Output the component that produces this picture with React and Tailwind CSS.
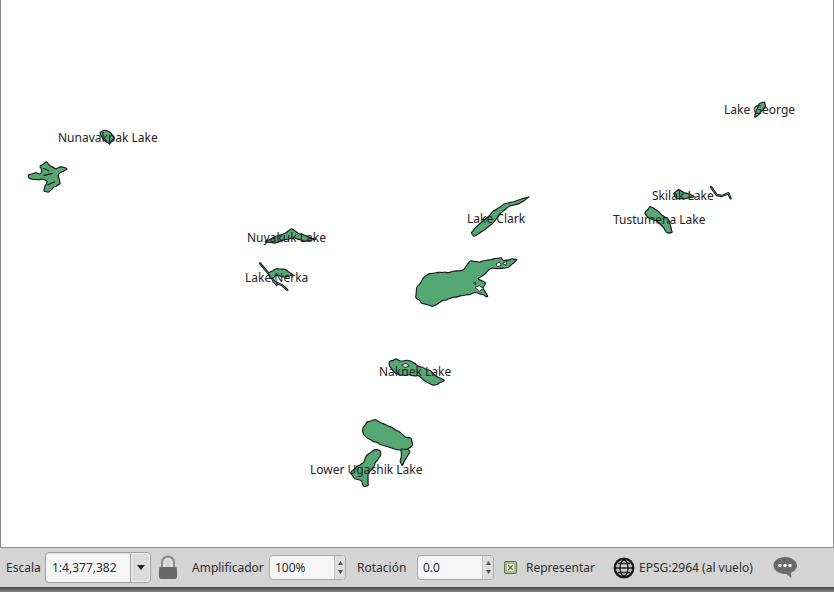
const font = { fontFamily: '"Noto Sans", "Open Sans", sans-serif' };

const labels = [
  ["Lake George", 724, 103],
  ["Nunavakpak Lake", 58, 131],
  ["Skilak Lake", 652, 189],
  ["Lake Clark", 467, 212],
  ["Tustumena Lake", 613, 213],
  ["Nuyakuk Lake", 247, 231],
  ["Lake Nerka", 245, 271],
  ["Naknek Lake", 379, 365],
  ["Lower Ugashik Lake", 310, 463],
];

// Roughens a coarse outline into a natural, slightly rounded coastline, repeatably.
function coast(pts, rough = 2) {
  const out = [];
  let seed = 11;
  const rnd = () => {
    seed = (seed * 16807) % 2147483647;
    return (seed % 1000) / 500 - 1;
  };
  pts.forEach((p, i) => {
    const q = pts[(i + 1) % pts.length];
    const steps = Math.max(1, Math.round(Math.hypot(q[0] - p[0], q[1] - p[1]) / 8));
    for (let s = 0; s < steps; s++) {
      const t = s / steps;
      out.push([p[0] + (q[0] - p[0]) * t + rnd() * rough, p[1] + (q[1] - p[1]) * t + rnd() * rough]);
    }
  });
  const mid = (a, b) => ((a[0] + b[0]) / 2).toFixed(1) + " " + ((a[1] + b[1]) / 2).toFixed(1);
  let d = "M" + mid(out[out.length - 1], out[0]);
  out.forEach((p, i) => {
    d += "Q" + p[0].toFixed(1) + " " + p[1].toFixed(1) + " " + mid(p, out[(i + 1) % out.length]);
  });
  return d + "Z";
}

function Lake({ x, y, pts, rough }) {
  return (
    <g transform={`translate(${x} ${y}) scale(0.3333)`}>
      <path d={coast(pts, rough)} fill="#55a873" stroke="#141414" strokeWidth="3.4" strokeLinejoin="round" />
    </g>
  );
}

function River({ x, y, d }) {
  return (
    <g transform={`translate(${x} ${y}) scale(0.3333)`} fill="none" strokeLinecap="round" strokeLinejoin="round">
      <path d={d} stroke="#141414" strokeWidth="7" />
      <path d={d} stroke="#55a873" strokeWidth="2" />
    </g>
  );
}

function Holes({ x, y, children }) {
  return (
    <g transform={`translate(${x} ${y}) scale(0.3333)`} fill="#fff" stroke="#141414" strokeWidth="2.4">
      {children}
    </g>
  );
}

function MapShapes() {
  return (
    <svg width="832" height="547" viewBox="1 0 832 547" className="absolute left-0 top-0">
      <Lake x={410} y={250} pts={[[18,115],[45,78],[65,70],[120,66],[160,60],[180,32],[210,36],[250,28],[275,22],[280,33],[305,26],[322,28],[298,50],[270,57],[245,54],[225,72],[203,88],[228,98],[218,115],[234,140],[200,127],[165,137],[130,142],[100,152],[70,168],[33,158],[18,142]]} />
      <Holes x={410} y={250}>
        <path d="M195 112L208 107L220 116L208 124Z" />
        <path d="M258 42L268 36L274 46L262 50Z" />
        <path d="M278 40L290 34L288 46Z" />
        <path d="M190 100L196 96L198 103Z" />
      </Holes>
      <Lake x={400} y={190} rough={1} pts={[[388,20],[360,40],[325,50],[300,72],[280,98],[250,122],[222,140],[214,128],[232,108],[260,85],[282,62],[312,42],[350,32]]} />
      <Lake x={300} y={350} pts={[[265,38],[285,27],[302,33],[330,32],[352,48],[385,58],[400,72],[420,86],[433,92],[405,106],[380,98],[358,78],[330,75],[300,75],[283,68],[272,52]]} />
      <Holes x={300} y={350}><path d="M305 45L318 40L328 48L315 52Z" /></Holes>
      <Lake x={350} y={415} pts={[[36,45],[48,22],[75,14],[105,30],[132,40],[165,65],[183,70],[187,92],[172,103],[142,106],[105,92],[62,76],[40,60]]} />
      <Lake x={350} y={415} rough={1} pts={[[152,103],[172,103],[181,110],[168,130],[156,153],[150,140],[155,122]]} />
      <Lake x={350} y={415} pts={[[70,106],[88,105],[92,122],[80,138],[72,155],[55,175],[54,195],[55,213],[40,215],[35,198],[12,192],[2,172],[22,155],[42,143],[52,120]]} />
      <Lake x={20} y={120} rough={1} pts={[[238,38],[256,30],[274,40],[283,55],[268,72],[252,62]]} />
      <Lake x={20} y={155} pts={[[23,62],[45,53],[60,58],[66,50],[60,35],[78,20],[90,33],[105,40],[125,36],[143,40],[128,50],[112,60],[122,86],[102,97],[87,112],[73,110],[76,90],[83,82],[72,72],[40,74],[26,70]]} />
      <g transform="translate(20 155) scale(0.3333)" fill="none" stroke="#141414" strokeWidth="3.5">
        <path d="M70 40L88 48M70 62L98 55M82 90L105 80" />
      </g>
      <Lake x={240} y={220} rough={1} pts={[[73,66],[110,48],[130,43],[155,26],[172,38],[197,48],[228,58],[195,64],[165,54],[135,59],[105,69]]} />
      <River x={240} y={220} d="M60 130L85 160L110 195M100 185L125 195L142 210" />
      <Lake x={240} y={220} rough={1} pts={[[83,160],[110,146],[135,148],[160,165],[135,172],[110,164],[95,177]]} />
      <Lake x={610} y={90} rough={1} pts={[[433,84],[436,65],[448,40],[464,36],[467,50],[454,64],[447,74]]} />
      <Lake x={610} y={90} rough={1} pts={[[190,312],[205,298],[222,308],[240,313],[254,320],[225,327],[200,325]]} />
      <River x={610} y={90} d="M303 291L320 315L335 318L355 310L362 325" />
      <Lake x={610} y={90} pts={[[102,372],[118,350],[134,356],[157,376],[178,393],[187,428],[173,430],[158,412],[138,392],[118,384]]} />
    </svg>
  );
}

function Spin({ value, className }) {
  return (
    <div className={`flex h-[25px] rounded-[4px] border border-[#a8a8a8] bg-[#f6f6f6] ${className}`}>
      <div className="flex-1 pl-[5px] text-[12px] leading-[23px] text-[#2e2e2e]">{value}</div>
      <div className="flex w-[11px] flex-col items-center justify-around rounded-r-[3px] border-l border-[#c4c4c4] bg-[#dedede] py-[3px]">
        <svg width="5" height="4" viewBox="0 0 5 4"><path d="M2.5 0L5 4H0Z" fill="#555" /></svg>
        <svg width="5" height="4" viewBox="0 0 5 4"><path d="M0 0H5L2.5 4Z" fill="#555" /></svg>
      </div>
    </div>
  );
}

export default function App() {
  return (
    <div style={font} className="flex h-[592px] w-[834px] flex-col overflow-hidden bg-[#d4d4d4] text-[#2e2e2e]">
      <div className="relative h-[548px] border border-t-0 border-[#8c8c8c] bg-white">
        <MapShapes />
        {labels.map(([t, x, y]) => (
          <span
            key={t}
            className="absolute whitespace-nowrap text-[12px] leading-[16px] text-[#222]"
            style={{ left: x - 1, top: y - 1 }}
          >
            {t}
          </span>
        ))}
      </div>
      <div className="flex h-[39px] items-center pl-[6px] text-[12px]">
        <span className="w-[35px]">Escala</span>
        <div className="ml-[4px] flex h-[31px] w-[106px] rounded-[4px] border border-[#a0a0a0] bg-[#f6f6f6] shadow-[inset_0_1px_1px_rgba(0,0,0,0.08)]">
          <div className="w-[84px] pl-[6px] text-[12px] leading-[29px]">1:4,377,382</div>
          <div className="flex flex-1 items-center justify-center rounded-r-[4px] border-l border-[#a0a0a0] bg-[#dcdcdc] shadow-[inset_0_0_0_1px_#eee]">
            <svg width="8" height="5" viewBox="0 0 8 5"><path d="M0 0H8L4 5Z" fill="#222" /></svg>
          </div>
        </div>
        <svg width="20" height="25" viewBox="0 0 20 25" className="ml-[7px]">
          <path d="M4 13V7.5a6 6 0 0 1 12 0V13" fill="none" stroke="#8a8a8a" strokeWidth="2" />
          <path d="M6.5 13V7.5a3.5 3.5 0 0 1 7 0V13" fill="none" stroke="#ececec" strokeWidth="1" />
          <rect x="1" y="12" width="18" height="12" rx="2" fill="#666" />
        </svg>
        <span className="ml-[14px] w-[72px]">Amplificador</span>
        <Spin value="100%" className="ml-[5px] w-[77px]" />
        <span className="ml-[11px] w-[50px]">Rotación</span>
        <Spin value="0.0" className="ml-[10px] w-[77px]" />
        <div className="ml-[10px] flex h-[13px] w-[13px] items-center justify-center rounded-[2px] border border-[#64743f] bg-[#a8c088]">
          <div className="flex h-[7px] w-[7px] items-center justify-center bg-white">
            <svg width="7" height="7" viewBox="0 0 7 7"><path d="M1 1L6 6M6 1L1 6" stroke="#64743f" strokeWidth="1.4" /></svg>
          </div>
        </div>
        <span className="ml-[9px] w-[70px]">Representar</span>
        <svg width="22" height="22" viewBox="0 0 22 22" className="ml-[17px]">
          <circle cx="11" cy="11" r="10.5" fill="#1c1c1c" />
          <circle cx="11" cy="11" r="8" fill="#cfcfcf" />
          <g fill="none" stroke="#1c1c1c" strokeWidth="1.3">
            <ellipse cx="11" cy="11" rx="4" ry="8" />
            <path d="M3 11H19M5 6.5H17M5 15.5H17" />
          </g>
        </svg>
        <span className="ml-[4px] w-[113px] whitespace-nowrap">EPSG:2964 (al vuelo)</span>
        <svg width="24" height="23" viewBox="0 0 24 23" className="ml-[21px]">
          <path d="M12 1C5.5 1 .5 4.8.5 9.5c0 4.6 5 8.4 11.5 8.4h1.5l5 4.1-.7-5.2c3.7-1.5 6.2-4.2 6.2-7.3C24 4.8 18.5 1 12 1Z" fill="#6a6a6a" />
          <circle cx="7" cy="9.5" r="1.7" fill="#fff" /><circle cx="12" cy="9.5" r="1.7" fill="#fff" /><circle cx="17" cy="9.5" r="1.7" fill="#fff" />
        </svg>
      </div>
      <div className="flex-1 bg-gradient-to-b from-[#444] to-[#8a8a8a]" />
    </div>
  );
}
